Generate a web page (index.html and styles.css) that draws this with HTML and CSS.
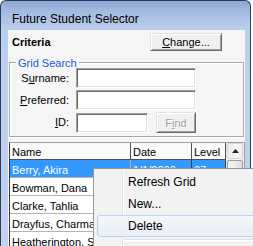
FILE: index.html
```html
<!DOCTYPE html>
<html>
<head>
<meta charset="utf-8">
<link rel="stylesheet" href="styles.css">
</head>
<body>
<div class="window">
  <div class="titlebar">Future Student Selector</div>
  <div class="client">
    <div class="criteria">
      <span class="heading">Criteria</span>
      <button class="btn btn-change"><u>C</u>hange...</button>
    </div>
    <div class="group">
      <div class="legend">Grid Search</div>
      <div class="form">
        <label class="lbl">S<u>u</u>rname:</label><span class="input wide"></span>
        <label class="lbl"><u>P</u>referred:</label><span class="input wide"></span>
        <label class="lbl"><u>I</u>D:</label>
        <div class="idrow"><span class="input narrow"></span><button class="btn btn-find" disabled>F<u>i</u>nd</button></div>
      </div>
    </div>
    <div class="grid">
      <div class="table">
        <div class="row head"><div class="c c-name">Name</div><div class="c c-date">Date</div><div class="c c-level">Level</div></div>
        <div class="row sel"><div class="c c-name">Berry, Akira</div><div class="c c-date">1/1/2000</div><div class="c c-level">07</div></div>
        <div class="row"><div class="c c-name">Bowman, Dana</div><div class="c c-date"></div><div class="c c-level"></div></div>
        <div class="row"><div class="c c-name">Clarke, Tahlia</div><div class="c c-date"></div><div class="c c-level"></div></div>
        <div class="row"><div class="c c-name">Drayfus, Charmaine</div><div class="c c-date"></div><div class="c c-level"></div></div>
        <div class="row"><div class="c c-name">Heatherington, Sam</div><div class="c c-date"></div><div class="c c-level"></div></div>
      </div>
      <div class="vscroll">
        <div class="sb-up"><svg width="7" height="4" viewBox="0 0 7 4"><path d="M0 4 L3.5 0 L7 4 Z" fill="#222"/></svg></div>
        <div class="sb-thumb"></div>
      </div>
    </div>
  </div>
</div>
<div class="menu">
  <div class="gutter"></div>
  <div class="item">Refresh Grid</div>
  <div class="item">New...</div>
  <div class="item hot">Delete</div>
  <div class="sep"></div>
</div>
</body>
</html>
```
FILE: styles.css
```css
html, body {
  margin: 0;
  padding: 0;
  background: #ffffff;
  overflow: hidden;
  width: 253px;
  height: 246px;
}
body {
  position: relative;
  font-family: "Liberation Sans", Arial, sans-serif;
  font-size: 11px;
  color: #000;
}
.window {
  width: 251px;
  height: 270px;
  box-sizing: border-box;
  border: 1px solid #2b3d5a;
  border-bottom: none;
  border-radius: 6px 6px 0 0;
  background: linear-gradient(#8fa7d4 0px, #a9bfe3 14px, #bccfec 30px, #c1d3ee 100%);
  padding: 0 5px 0 7px;
}
.titlebar {
  height: 29px;
  box-sizing: border-box;
  padding: 11px 0 0 4px;
  font-size: 12px;
  line-height: 14px;
  white-space: nowrap;
}
.client {
  width: 237px;
  height: 240px;
  background: #f5f5f5;
  display: flex;
  flex-direction: column;
}
.criteria {
  display: flex;
  align-items: center;
  padding: 3px 23px 0 4px;
}
.heading {
  font-weight: bold;
}
.btn {
  font-family: inherit;
  font-size: 11px;
  color: #000;
  background: #f0f0f0;
  border: 1px solid;
  border-color: #e3e3e3 #696969 #696969 #e3e3e3;
  box-shadow: inset 1px 1px 0 #ffffff, inset -1px -1px 0 #a0a0a0;
  padding: 0;
  margin: 0;
  box-sizing: border-box;
}
.btn-change {
  margin-left: auto;
  width: 72px;
  height: 18px;
  line-height: 14px;
}
.group {
  margin: 11px 1px 0 1px;
  border: 1px solid #a9a9a9;
  box-shadow: 1px 1px 0 #ffffff, inset 1px 1px 0 #ffffff;
  padding: 0 0 3px 0;
}
.legend {
  margin: -6px 0 0 6px;
  padding: 0 2px;
  width: fit-content;
  line-height: 13px;
  background: #f5f5f5;
  color: #1a5ad6;
}
.form {
  margin-top: -2px;
  padding-left: 2px;
  display: grid;
  grid-template-columns: 57px 120px;
  grid-template-rows: 20px 20px 21px;
  column-gap: 7px;
  row-gap: 2px;
  align-items: center;
}
.lbl {
  text-align: right;
  line-height: 13px;
}
.input {
  display: block;
  height: 20px;
  box-sizing: border-box;
  background: #ffffff;
  border: 1px solid;
  border-color: #a0a0a0 #ffffff #ffffff #a0a0a0;
  box-shadow: inset 1px 1px 0 #696969, inset -1px -1px 0 #e3e3e3;
}
.wide {
  width: 120px;
}
.narrow {
  width: 72px;
}
.idrow {
  display: flex;
  align-items: center;
  gap: 8px;
}
.btn-find {
  width: 40px;
  height: 21px;
  color: #a0a0a0;
  text-shadow: 1px 1px 0 #ffffff;
}
.grid {
  margin: 5px 0 0 1px;
  width: 236px;
  height: 120px;
  box-sizing: border-box;
  border: 1px solid #a0a0a0;
  border-left-color: #3a3a3a;
  display: flex;
  background: #ffffff;
}
.table {
  width: 216px;
}
.row {
  display: grid;
  grid-template-columns: 121px 61px 34px;
  height: 18px;
}
.c {
  box-sizing: border-box;
  border-right: 1px solid #b4b4b4;
  border-bottom: 1px solid #b4b4b4;
  padding: 4px 0 0 2px;
  line-height: 13px;
  white-space: nowrap;
  overflow: hidden;
}
.head {
  height: 17px;
}
.head .c {
  padding-top: 3px;
  border-right-color: #505050;
  border-bottom-color: #505050;
  background: #fafafa;
}
.sel .c {
  background: #3399ff;
  color: #ffffff;
}
.sel .c-level,
.sel .c-date {
  border-right-color: #404040;
}
.vscroll {
  width: 18px;
  background: linear-gradient(90deg, #eaeaea, #f6f6f6 60%, #eeeeee);
  display: flex;
  flex-direction: column;
  align-items: center;
}
.sb-up {
  width: 16px;
  height: 16px;
  box-sizing: border-box;
  border: 1px solid #d8d8d8;
  border-radius: 2px;
  display: flex;
  align-items: center;
  justify-content: center;
}
.sb-thumb {
  margin-top: 1px;
  width: 16px;
  height: 40px;
  box-sizing: border-box;
  border: 1px solid #9a9a9a;
  border-radius: 2px;
  background: linear-gradient(90deg, #f4f4f4, #ececec 50%, #dddddd);
}
.menu {
  position: absolute;
  left: 93px;
  top: 168px;
  width: 170px;
  height: 100px;
  box-sizing: border-box;
  border: 1px solid #979797;
  background: #f2f2f2;
  padding-top: 2px;
  font-size: 12px;
}
.gutter {
  position: absolute;
  left: 28px;
  top: 2px;
  bottom: 0;
  width: 1px;
  background: #e2e3e3;
  box-shadow: 1px 0 0 #ffffff;
}
.item {
  position: relative;
  height: 22px;
  box-sizing: border-box;
  margin-left: 3px;
  border: 1px solid transparent;
  border-radius: 3px;
  padding-left: 30px;
  line-height: 20px;
}
.hot {
  border-color: #b4d3f7;
  background: linear-gradient(#f5f7fb, #e9edf5);
}
.sep {
  position: relative;
  margin: 2px 0 2px 30px;
  height: 1px;
  background: #e0e0e0;
  box-shadow: 0 1px 0 #ffffff;
}
```
